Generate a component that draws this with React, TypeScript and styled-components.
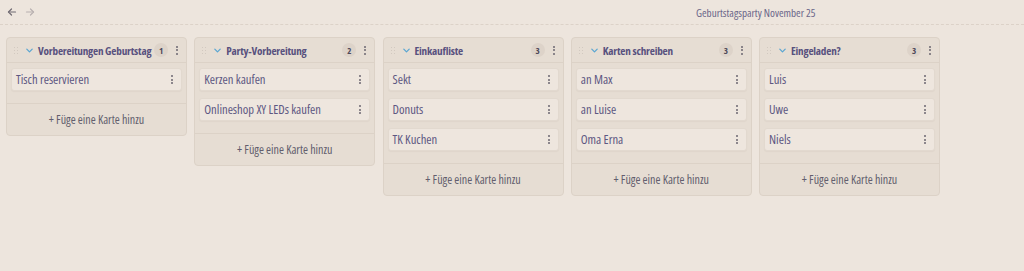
import React from "react";
import styled, { createGlobalStyle } from "styled-components";

const GlobalStyle = createGlobalStyle`
  html, body {
    margin: 0;
    padding: 0;
    background: #ede5dd;
    font-family: "Open Sans", Lato, sans-serif;
    font-stretch: 87.5%;
  }
`;

const Page = styled.div`
  width: 1024px;
  height: 271px;
  background: #ede5dd;
  overflow: hidden;
`;

const TopBar = styled.div`
  height: 25px;
  display: flex;
  align-items: center;
  border-bottom: 1px dashed #dcd2c8;
  box-sizing: border-box;
  padding-left: 5px;
`;

const NavButton = styled.span<{ $dim?: boolean }>`
  width: 14px;
  height: 14px;
  display: flex;
  align-items: center;
  justify-content: center;
  margin-right: 4px;
  color: ${(p) => (p.$dim ? "#b8b0b0" : "#6f6a72")};
`;

const BoardTitle = styled.div`
  margin-left: 655px;
  font-size: 11.1px;
  color: #6b6589;
`;

const Board = styled.div`
  display: flex;
  align-items: flex-start;
  gap: 7.25px;
  padding: 12px 6px;
`;

const Column = styled.div`
  width: 181px;
  flex: none;
  background: #e6ddd3;
  border: 1px solid #dcd2c7;
  border-radius: 4px;
  box-sizing: border-box;
`;

const ColumnHeader = styled.div`
  height: 25px;
  display: flex;
  align-items: center;
  padding: 0 4px 0 6px;
  border-bottom: 1px solid #dcd2c7;
  box-sizing: border-box;
`;

const Handle = styled.span`
  width: 6px;
  height: 8px;
  margin-right: 6px;
  flex: none;
  background-image: radial-gradient(circle, #d2c9c0 0.8px, transparent 1px);
  background-size: 3px 3px;
`;

const Chevron = styled.svg`
  width: 9px;
  height: 9px;
  margin-right: 4px;
  flex: none;
`;

const ColumnTitle = styled.span`
  flex: 1;
  min-width: 0;
  font-size: 11.2px;
  font-weight: 700;
  letter-spacing: -0.2px;
  color: #58517e;
  white-space: nowrap;
`;

const Badge = styled.span`
  width: 14px;
  height: 14px;
  border-radius: 50%;
  background: #ddd3c9;
  color: #4f4a5a;
  font-size: 9px;
  font-weight: 700;
  display: flex;
  align-items: center;
  justify-content: center;
  margin-left: 2px;
  flex: none;
`;

const Kebab = styled.span`
  width: 10px;
  display: flex;
  flex-direction: column;
  align-items: center;
  gap: 1.5px;
  margin-left: 4px;
  flex: none;

  i {
    width: 2px;
    height: 2px;
    border-radius: 1px;
    background: #6b6670;
  }
`;

const CardList = styled.div`
  display: flex;
  flex-direction: column;
  gap: 7px;
  padding: 5px 4px 12px;
  border-bottom: 1px solid #dcd2c7;
`;

const Card = styled.div`
  height: 23px;
  display: flex;
  align-items: center;
  padding: 0 4px 0 4px;
  background: #eee6de;
  border: 1px solid #e2d9cf;
  border-radius: 3px;
  box-shadow: 0 1px 1px rgba(120, 100, 80, 0.06);
  box-sizing: border-box;
`;

const CardText = styled.span`
  flex: 1;
  font-size: 12.6px;
  color: #5d5782;
`;

const Footer = styled.div`
  height: 31px;
  display: flex;
  align-items: center;
  justify-content: center;
  font-size: 12px;
  color: #625d6d;
`;

type ColumnData = { title: string; cards: string[] };

const columns: ColumnData[] = [
  { title: "Vorbereitungen Geburtstag", cards: ["Tisch reservieren"] },
  { title: "Party-Vorbereitung", cards: ["Kerzen kaufen", "Onlineshop XY LEDs kaufen"] },
  { title: "Einkaufliste", cards: ["Sekt", "Donuts", "TK Kuchen"] },
  { title: "Karten schreiben", cards: ["an Max", "an Luise", "Oma Erna"] },
  { title: "Eingeladen?", cards: ["Luis", "Uwe", "Niels"] },
];

const Dots = () => (
  <Kebab>
    <i />
    <i />
    <i />
  </Kebab>
);

const Arrow = ({ dir }: { dir: "left" | "right" }) => (
  <svg width="10" height="10" viewBox="0 0 10 10" fill="none" stroke="currentColor" strokeWidth="1.2" strokeLinecap="round" strokeLinejoin="round">
    {dir === "left" ? (
      <>
        <path d="M8.5 5H1.5" />
        <path d="M4.5 2L1.5 5L4.5 8" />
      </>
    ) : (
      <>
        <path d="M1.5 5H8.5" />
        <path d="M5.5 2L8.5 5L5.5 8" />
      </>
    )}
  </svg>
);

export default function App() {
  return (
    <Page>
      <GlobalStyle />
      <TopBar>
        <NavButton>
          <Arrow dir="left" />
        </NavButton>
        <NavButton $dim>
          <Arrow dir="right" />
        </NavButton>
        <BoardTitle>Geburtstagsparty November 25</BoardTitle>
      </TopBar>
      <Board>
        {columns.map((col) => (
          <Column key={col.title}>
            <ColumnHeader>
              <Handle />
              <Chevron viewBox="0 0 10 10">
                <path d="M2 3.5L5 6.5L8 3.5" fill="none" stroke="#5aa6d2" strokeWidth="1.4" strokeLinecap="round" strokeLinejoin="round" />
              </Chevron>
              <ColumnTitle>{col.title}</ColumnTitle>
              <Badge>{col.cards.length}</Badge>
              <Dots />
            </ColumnHeader>
            <CardList>
              {col.cards.map((c) => (
                <Card key={c}>
                  <CardText>{c}</CardText>
                  <Dots />
                </Card>
              ))}
            </CardList>
            <Footer>+ Füge eine Karte hinzu</Footer>
          </Column>
        ))}
      </Board>
    </Page>
  );
}
